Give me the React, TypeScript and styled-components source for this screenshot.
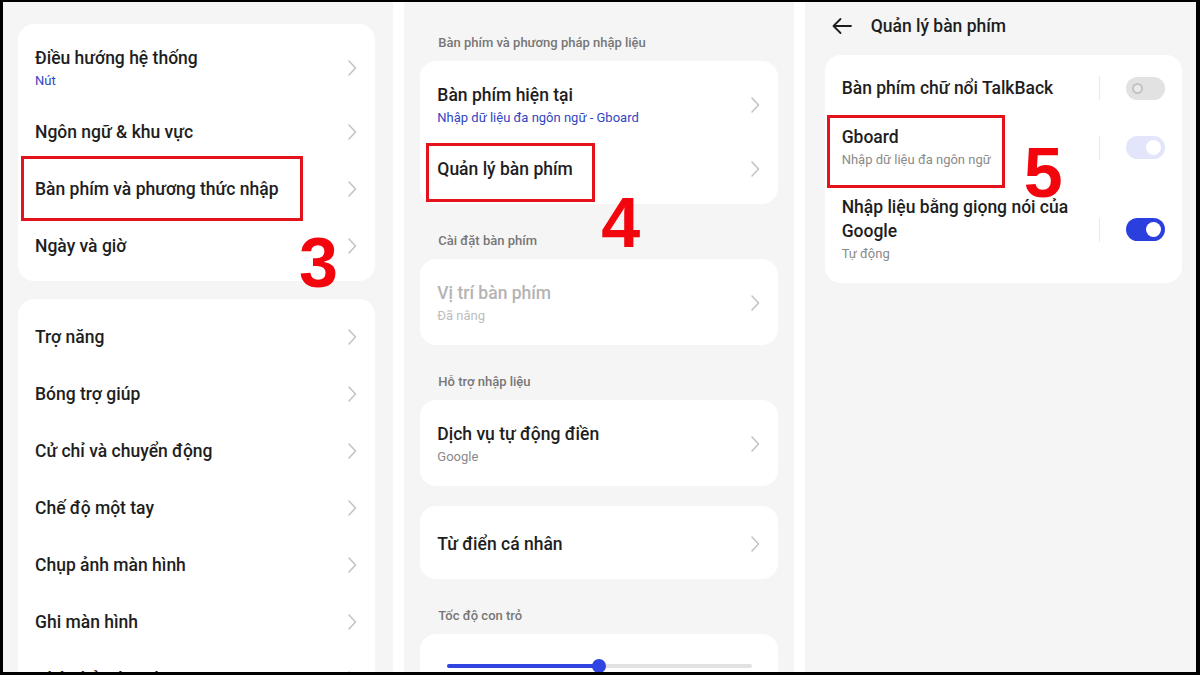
import React from 'react';
import styled, { createGlobalStyle } from 'styled-components';

const GlobalStyle = createGlobalStyle`
	html, body {
		margin: 0;
		padding: 0;
		background: #000;
	}
	body {
		font-family: Roboto, 'Noto Sans', 'DejaVu Sans', sans-serif;
		-webkit-font-smoothing: antialiased;
	}
`;

const Frame = styled.div`
	width: 1200px;
	height: 675px;
	box-sizing: border-box;
	padding: 2px 4px 3px 3px;
	background: #000;
	overflow: hidden;
`;

const Screens = styled.div`
	display: flex;
	gap: 11px;
	height: 100%;
	background: #fff;
`;

const Panel = styled.div<{ $top?: number; $left: number; $right: number }>`
	position: relative;
	flex: 1;
	box-sizing: border-box;
	padding: ${(p) => p.$top ?? 0}px ${(p) => p.$right}px 0 ${(p) => p.$left}px;
	background: #f5f5f5;
	overflow: hidden;
`;

const Card = styled.div<{ $gap?: number }>`
	background: #fff;
	border-radius: 16px;
	padding: 9px 17px 7px 17px;
	margin-bottom: ${(p) => p.$gap ?? 0}px;
`;

const Row = styled.div<{ $h?: number }>`
	display: flex;
	align-items: center;
	justify-content: space-between;
	min-height: ${(p) => p.$h ?? 57}px;
`;

const SwitchRow = styled.div<{ $pt: number; $pb: number }>`
	display: flex;
	align-items: center;
	justify-content: space-between;
	padding: ${(p) => p.$pt}px 0 ${(p) => p.$pb}px 0;
`;

const RowText = styled.div`
	display: flex;
	flex-direction: column;
	min-width: 0;
`;

const Title = styled.div<{ $muted?: boolean }>`
	font-size: 17.5px;
	line-height: 24px;
	font-weight: 500;
	color: ${(p) => (p.$muted ? '#b4b4b4' : '#1e1e1e')};
`;

const Sub = styled.div<{ $tone?: 'blue' | 'gray' | 'light' }>`
	margin-top: 1px;
	font-size: 13px;
	line-height: 20px;
	color: ${(p) => (p.$tone === 'blue' ? '#3146c4' : p.$tone === 'light' ? '#bdbdbd' : '#8a8a8a')};
`;

const SectionLabel = styled.div<{ $top?: number }>`
	padding: ${(p) => p.$top ?? 27}px 0 8px 18px;
	font-size: 13px;
	line-height: 20px;
	font-weight: 500;
	color: #777;
`;

const TopBar = styled.div`
	display: flex;
	align-items: center;
	gap: 18px;
	height: 24px;
	padding: 12px 0 0 6px;
	margin-bottom: 17px;
	font-size: 17.5px;
	font-weight: 500;
	color: #1e1e1e;
`;

const Divider = styled.div`
	width: 1px;
	height: 24px;
	background: #e9e9e9;
	margin-right: 26px;
`;

const SwitchArea = styled.div`
	display: flex;
	align-items: center;
	flex-shrink: 0;
`;

const Track = styled.div<{ $state: 'off' | 'dim' | 'on' }>`
	position: relative;
	width: 39px;
	height: 23px;
	border-radius: 12px;
	background: ${(p) => (p.$state === 'on' ? '#2b3fdf' : p.$state === 'dim' ? '#e3e6fa' : '#e2e2e2')};
`;

const Knob = styled.div<{ $state: 'off' | 'dim' | 'on' }>`
	position: absolute;
	top: ${(p) => (p.$state === 'off' ? 6 : 4)}px;
	left: ${(p) => (p.$state === 'off' ? 6 : 20)}px;
	box-sizing: border-box;
	width: ${(p) => (p.$state === 'off' ? 11 : 15)}px;
	height: ${(p) => (p.$state === 'off' ? 11 : 15)}px;
	border-radius: 50%;
	background: ${(p) => (p.$state === 'off' ? '#ebebeb' : '#fff')};
	border: ${(p) => (p.$state === 'off' ? '2.5px solid #c3c3c3' : 'none')};
`;

const SliderBox = styled.div`
	position: relative;
	height: 60px;
	margin: 0 -17px;
`;

const SliderTrack = styled.div`
	position: absolute;
	left: 27px;
	right: 26px;
	top: 21px;
	height: 4px;
	border-radius: 2px;
	background: #e2e2e2;
`;

const SliderFill = styled.div`
	height: 100%;
	border-radius: 2px;
	background: #2f44e0;
`;

const SliderThumb = styled.div`
	position: absolute;
	top: -5px;
	width: 14px;
	height: 14px;
	margin-left: -7px;
	border-radius: 50%;
	background: #2f44e0;
`;

const Highlight = styled.div<{ $x: number; $y: number; $w: number; $h: number }>`
	position: absolute;
	left: ${(p) => p.$x}px;
	top: ${(p) => p.$y}px;
	width: ${(p) => p.$w}px;
	height: ${(p) => p.$h}px;
	box-sizing: border-box;
	border: 3px solid #e3121b;
	pointer-events: none;
`;

const StepNumber = styled.div<{ $x: number; $y: number }>`
	position: absolute;
	left: ${(p) => p.$x}px;
	top: ${(p) => p.$y}px;
	font-family: 'Liberation Sans', Arial, sans-serif;
	font-weight: 700;
	font-size: 70px;
	line-height: 70px;
	color: #f2050d;
`;

const Chevron = () => (
	<svg width='12' height='18' viewBox='0 0 12 18' fill='none'>
		<path d='M3 2 L9.5 9 L3 16' stroke='#c2c2c2' strokeWidth='1.5' strokeLinecap='round' strokeLinejoin='round' />
	</svg>
);

const BackArrow = () => (
	<svg width='22' height='18' viewBox='0 0 22 18' fill='none'>
		<path d='M20 9 H2.5 M9.5 2 L2.5 9 L9.5 16' stroke='#1e1e1e' strokeWidth='1.8' strokeLinecap='round' strokeLinejoin='round' />
	</svg>
);

const Switch = ({ state }: { state: 'off' | 'dim' | 'on' }) => (
	<SwitchArea>
		<Divider />
		<Track $state={state}>
			<Knob $state={state} />
		</Track>
	</SwitchArea>
);

type Item = { title: string; sub?: string; tone?: 'blue' | 'gray' | 'light'; muted?: boolean };

const NavRow = ({ item }: { item: Item }) => (
	<Row $h={item.sub ? 70 : 57}>
		<RowText>
			<Title $muted={item.muted}>{item.title}</Title>
			{item.sub && <Sub $tone={item.tone}>{item.sub}</Sub>}
		</RowText>
		<Chevron />
	</Row>
);

const systemTop: Item[] = [
	{ title: 'Điều hướng hệ thống', sub: 'Nút', tone: 'blue' },
	{ title: 'Ngôn ngữ & khu vực' },
	{ title: 'Bàn phím và phương thức nhập' },
	{ title: 'Ngày và giờ' },
];

const systemBottom: Item[] = [
	{ title: 'Trợ năng' },
	{ title: 'Bóng trợ giúp' },
	{ title: 'Cử chỉ và chuyển động' },
	{ title: 'Chế độ một tay' },
	{ title: 'Chụp ảnh màn hình' },
	{ title: 'Ghi màn hình' },
	{ title: 'Nhân bản ứng dụng' },
];

const App = () => {
	return (
		<>
			<GlobalStyle />
			<Frame>
				<Screens>
					<Panel $top={22} $left={15} $right={18}>
						<Card $gap={18}>
							{systemTop.map((item) => (
								<NavRow key={item.title} item={item} />
							))}
						</Card>
						<Card>
							{systemBottom.map((item) => (
								<NavRow key={item.title} item={item} />
							))}
						</Card>
						<Highlight $x={18} $y={154} $w={282} $h={65} />
						<StepNumber $x={296} $y={226}>3</StepNumber>
					</Panel>

					<Panel $left={16} $right={16}>
						<SectionLabel $top={31}>Bàn phím và phương pháp nhập liệu</SectionLabel>
						<Card>
							<NavRow item={{ title: 'Bàn phím hiện tại', sub: 'Nhập dữ liệu đa ngôn ngữ - Gboard', tone: 'blue' }} />
							<NavRow item={{ title: 'Quản lý bàn phím' }} />
						</Card>
						<SectionLabel>Cài đặt bàn phím</SectionLabel>
						<Card>
							<NavRow item={{ title: 'Vị trí bàn phím', sub: 'Đã nâng', tone: 'light', muted: true }} />
						</Card>
						<SectionLabel>Hỗ trợ nhập liệu</SectionLabel>
						<Card $gap={20}>
							<NavRow item={{ title: 'Dịch vụ tự động điền', sub: 'Google', tone: 'gray' }} />
						</Card>
						<Card>
							<NavRow item={{ title: 'Từ điển cá nhân' }} />
						</Card>
						<SectionLabel>Tốc độ con trỏ</SectionLabel>
						<Card>
							<SliderBox>
								<SliderTrack>
									<SliderFill style={{ width: '50%' }} />
									<SliderThumb style={{ left: '50%' }} />
								</SliderTrack>
							</SliderBox>
						</Card>
						<Highlight $x={22} $y={141} $w={169} $h={59} />
						<StepNumber $x={197} $y={186}>4</StepNumber>
					</Panel>

					<Panel $left={20} $right={14}>
						<TopBar>
							<BackArrow />
							<span>Quản lý bàn phím</span>
						</TopBar>
						<Card>
							<SwitchRow $pt={12} $pb={16}>
								<RowText>
									<Title>Bàn phím chữ nổi TalkBack</Title>
								</RowText>
								<Switch state='off' />
							</SwitchRow>
							<SwitchRow $pt={9} $pb={12}>
								<RowText>
									<Title>Gboard</Title>
									<Sub>Nhập dữ liệu đa ngôn ngữ</Sub>
								</RowText>
								<Switch state='dim' />
							</SwitchRow>
							<SwitchRow $pt={13} $pb={12}>
								<RowText>
									<Title>
										Nhập liệu bằng giọng nói của
										<br />
										Google
									</Title>
									<Sub>Tự động</Sub>
								</RowText>
								<Switch state='on' />
							</SwitchRow>
						</Card>
						<Highlight $x={22} $y={113} $w={178} $h={73} />
						<StepNumber $x={219} $y={136}>5</StepNumber>
					</Panel>
				</Screens>
			</Frame>
		</>
	);
};

export default App;
